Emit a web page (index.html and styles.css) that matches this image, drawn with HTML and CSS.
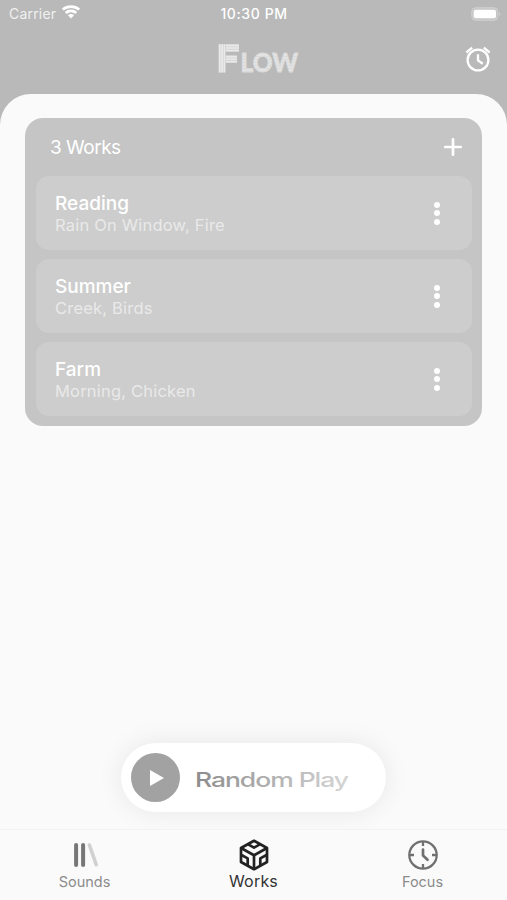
FILE: index.html
```html
<!DOCTYPE html>
<html lang="en">
<head>
    <meta charset="UTF-8">
    <meta name="viewport" content="width=device-width, initial-scale=1.0">
    <title>Flow - Works</title>
    <link rel="stylesheet" href="styles.css">
</head>
<body>
    <div class="app">
        <header class="header">
            <div class="status-bar">
                <div class="carrier">
                    <span>Carrier</span>
                    <svg width="18" height="14" viewBox="0 0 18 14" fill="none" stroke="#fff" stroke-width="2.7">
                        <path d="M.8 4.6C5.3 .5 12.7 .5 17.2 4.6"/>
                        <path d="M3.7 8C6.7 5.2 11.3 5.2 14.3 8"/>
                        <path d="M5.9 10.3Q9 7.6 12.1 10.3L9 13.6Z" fill="#fff" stroke="none"/>
                    </svg>
                </div>
                <span class="time">10:30 PM</span>
                <svg class="battery" width="30" height="14" viewBox="0 0 30 14">
                    <rect x=".8" y=".8" width="26" height="12.4" rx="3.8" fill="#c5c5c5" stroke="#d3d3d3"/>
                    <rect x="2.7" y="2.7" width="22.3" height="8.6" rx="2" fill="#fff"/>
                    <path d="M28.4 5Q30.4 7 28.4 9Z" fill="#d8d8d8"/>
                </svg>
            </div>
            <div class="title-bar">
                <svg class="logo" width="90" height="36" viewBox="0 0 90 36">
                    <defs>
                        <pattern id="stripes" width="3" height="3" patternUnits="userSpaceOnUse">
                            <rect width="3" height="3" fill="#e3e3e3"/>
                            <rect width="3" height=".6" fill="#d6d6d6"/>
                        </pattern>
                    </defs>
                    <path d="M11.6 3.3h13.4v7.2H11.6zM11.6 14.6h11.4v7.2H11.6zM4.6 3.3h6.6v28.3H4.6z" fill="#d6d6d6"/>
                    <path d="M5.7 3.3v28.3M8.2 3.3v28.3M10.6 3.3v28.3M12 4.4h13M12 7h13M12 9.6h13M12 15.6h11M12 18.2h11M12 20.8h11" fill="none" stroke="#e9e9e9" stroke-width="1.6"/>
                    <text x="26.5" y="31.3" textLength="57.5" lengthAdjust="spacingAndGlyphs" fill="url(#stripes)" stroke="#dcdcdc" stroke-width=".8">LOW</text>
                </svg>
                <svg class="alarm" width="26" height="26" viewBox="0 0 26 26" fill="none" stroke="#fff" stroke-width="2.3">
                    <circle cx="13" cy="14" r="10.4"/>
                    <path d="M1.4 6.5L7.2 1.6M24.6 6.5L18.8 1.6M13 8.3v6.2l4.8 3.3"/>
                </svg>
            </div>
        </header>

        <main class="sheet">
            <section class="works">
                <div class="works-head">
                    <h1>3 Works</h1>
                    <svg width="18" height="18" viewBox="0 0 18 18" stroke="#fff" stroke-width="2.7" stroke-linecap="round">
                        <path d="M9 1.3v15.4M1.3 9h15.4"/>
                    </svg>
                </div>
                <ul class="work-list">
                    <li class="work">
                        <div>
                            <h2>Reading</h2>
                            <p>Rain On Window, Fire</p>
                        </div>
                        <div class="dots"><i></i><i></i><i></i></div>
                    </li>
                    <li class="work">
                        <div>
                            <h2>Summer</h2>
                            <p>Creek, Birds</p>
                        </div>
                        <div class="dots"><i></i><i></i><i></i></div>
                    </li>
                    <li class="work">
                        <div>
                            <h2>Farm</h2>
                            <p>Morning, Chicken</p>
                        </div>
                        <div class="dots"><i></i><i></i><i></i></div>
                    </li>
                </ul>
            </section>

            <div class="random-play">
                <div class="play">
                    <svg width="14" height="16" viewBox="0 0 14 16"><path d="M0 0L14 8L0 16Z" fill="#fff"/></svg>
                </div>
                <svg width="156" height="28" viewBox="0 0 156 28">
                    <defs>
                        <linearGradient id="fade">
                            <stop offset="0" stop-color="#8c8c8c"/>
                            <stop offset="1" stop-color="#d6d6d6"/>
                        </linearGradient>
                    </defs>
                    <text x="0" y="22.7" textLength="153" lengthAdjust="spacingAndGlyphs" fill="url(#fade)">Random Play</text>
                </svg>
            </div>
        </main>

        <nav class="tabs">
            <div class="tab">
                <svg width="26" height="26" viewBox="0 0 26 26" stroke-width="4" stroke-linecap="round">
                    <path d="M4.1 3v20M11.1 3v20" stroke="#777"/>
                    <path d="M17.4 3L24.2 22.7" stroke="#d1d1d1" stroke-width="3.6"/>
                </svg>
                <span>Sounds</span>
            </div>
            <div class="tab active">
                <svg width="30" height="32" viewBox="0 0 30 32" fill="none" stroke="#222" stroke-width="2.7" stroke-linejoin="round">
                    <path d="M15 1.8L28 9v14L15 30.2L2 23V9Z"/>
                    <path d="M2 9l13 7.2L28 9M15 16.2v14M9.2 5.4L15 8.7l5.8-3.3M2 15.8l6.7 3.6v7.1M28 15.8l-6.7 3.6v7.1"/>
                </svg>
                <span>Works</span>
            </div>
            <div class="tab">
                <svg width="30" height="30" viewBox="0 0 30 30" fill="none" stroke="#707070" stroke-width="2.3">
                    <circle cx="15" cy="15" r="13.7"/>
                    <path d="M15 1v5M15 24v5M1 15h5M24 15h5"/>
                    <path d="M15 9.5v6l4.5 4.3" stroke-width="2.7" stroke-linecap="round"/>
                </svg>
                <span>Focus</span>
            </div>
        </nav>
    </div>
</body>
</html>
```
FILE: styles.css
```css
* {
    margin: 0;
    padding: 0;
    box-sizing: border-box;
}

body {
    font-family: Inter, Roboto, sans-serif;
    background: #b9b9b9;
}

svg {
    display: block;
    flex: none;
}

.app {
    height: 900px;
    display: flex;
    flex-direction: column;
    overflow: hidden;
}

.header {
    height: 94px;
    color: #fff;
}

.status-bar {
    display: grid;
    grid-template-columns: 1fr auto 1fr;
    align-items: center;
    height: 27px;
    padding: 0 6px 0 9px;
    font-size: 14px;
}

.carrier {
    display: flex;
    gap: 6px;
    color: #f0f0f0;
    letter-spacing: 0.2px;
}

.time {
    font-weight: 500;
    font-size: 14px;
    letter-spacing: 0.6px;
    transform: translateX(-1px);
}

.battery {
    justify-self: end;
}

.title-bar {
    display: grid;
    grid-template-columns: 1fr auto 1fr;
    align-items: center;
    height: 64px;
    padding: 0 16px;
}

.logo {
    grid-column: 2;
    margin-left: 10px;
}

.logo text {
    font-family: Lato, sans-serif;
    font-weight: 900;
    font-size: 26px;
}

.alarm {
    justify-self: end;
}

.sheet {
    flex: 1;
    display: flex;
    flex-direction: column;
    align-items: center;
    justify-content: space-between;
    padding: 24px 25px 17px;
    background: #fafafa;
    border-radius: 31px 31px 0 0;
}

.works {
    width: 457px;
    height: 308px;
    padding: 0 10px 10px 11px;
    background: #c5c5c5;
    border-radius: 18px;
    color: #fff;
}

.works-head {
    display: flex;
    justify-content: space-between;
    align-items: center;
    height: 58px;
    padding: 0 10px 0 14px;
}

.works-head h1 {
    font-size: 19px;
    font-weight: 400;
    letter-spacing: -0.5px;
}

.work-list {
    display: flex;
    flex-direction: column;
    gap: 9.2px;
    list-style: none;
}

.work {
    display: flex;
    justify-content: space-between;
    align-items: center;
    height: 74px;
    padding: 0 32px 0 19px;
    background: #cdcdcd;
    border-radius: 13px;
}

.work h2 {
    font-size: 19px;
    font-weight: 500;
    line-height: 23px;
}

.work p {
    font-size: 16.5px;
    line-height: 20px;
    color: #e9e9e9;
    letter-spacing: 0.2px;
}

.dots {
    display: flex;
    flex-direction: column;
    gap: 2.5px;
}

.dots i {
    width: 6px;
    height: 6px;
    border-radius: 50%;
    background: #fff;
}

.random-play {
    display: flex;
    align-items: center;
    gap: 15px;
    width: 265px;
    height: 69px;
    padding-left: 10px;
    border-radius: 35px;
    background: #fff;
    box-shadow: 0 0 26px rgba(0, 0, 0, 0.08);
}

.random-play text {
    font-size: 20px;
    font-weight: 500;
    letter-spacing: -0.8px;
}

.play {
    display: flex;
    align-items: center;
    justify-content: center;
    width: 49px;
    height: 49px;
    padding-left: 3px;
    border-radius: 50%;
    background: #a2a2a2;
}

.tabs {
    display: flex;
    height: 71px;
    background: #fafafa;
    border-top: 1px solid #f2f2f2;
    color: #8b8b8b;
}

.tab {
    flex: 1;
    display: flex;
    flex-direction: column;
    align-items: center;
    font-size: 14.5px;
}

.tab svg {
    height: 32px;
    margin-top: 9px;
}

.tab span {
    line-height: 20px;
    margin-top: 1px;
}

.tab.active {
    color: #333;
    font-size: 16px;
    letter-spacing: 0.2px;
}

.tab.active span {
    margin-top: 0;
}
```
